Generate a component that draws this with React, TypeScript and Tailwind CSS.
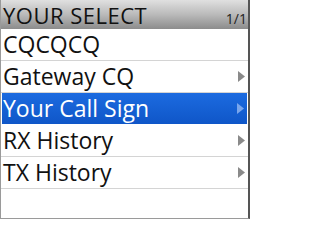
const rows = [
  { label: "CQCQCQ", arrow: false },
  { label: "Gateway CQ", arrow: true },
  { label: "Your Call Sign", arrow: true, selected: true },
  { label: "RX History", arrow: true },
  { label: "TX History", arrow: true },
];

function Arrow({ selected }: { selected?: boolean }) {
  return (
    <svg width="7" height="11" viewBox="0 0 7 11" className="mr-[3px] shrink-0">
      <path d="M0 0 L7 5.5 L0 11 Z" fill={selected ? "#7aa6ec" : "#8a8a8a"} />
    </svg>
  );
}

export default function App() {
  return (
    <div
      className="w-[250px] h-[219px] bg-white flex flex-col border-l border-r-2 border-b border-l-[#9a9a9a] border-r-[#555] border-b-[#9a9a9a] overflow-hidden"
      style={{ fontFamily: '"Open Sans", "Noto Sans", sans-serif' }}
    >
      {/* title bar */}
      <div className="h-[29px] shrink-0 flex items-start justify-between bg-gradient-to-b from-[#e0e0e0] via-[#bababa] to-[#8c8c8c] pl-[2px] pr-[1px]">
        <span className="mt-[4px] text-[22px] leading-none tracking-[0.5px] text-[#111]">YOUR SELECT</span>
        <span className="self-end text-[14px] leading-none mb-[3px] text-[#222]">1/1</span>
      </div>

      {rows.map((r) => (
        <div
          key={r.label}
          className={
            "h-[32px] shrink-0 flex items-center justify-between border-b " +
            (r.selected
              ? "bg-gradient-to-b from-[#1c6be0] to-[#0f56c8] text-white border-white mx-[1px] pl-[1px]"
              : "bg-white text-[#111] border-[#d4d4d4] pl-[2px]")
          }
        >
          <span className="text-[23px] leading-none">{r.label}</span>
          {r.arrow && <Arrow selected={r.selected} />}
        </div>
      ))}
      <div className="flex-1" />
    </div>
  );
}
